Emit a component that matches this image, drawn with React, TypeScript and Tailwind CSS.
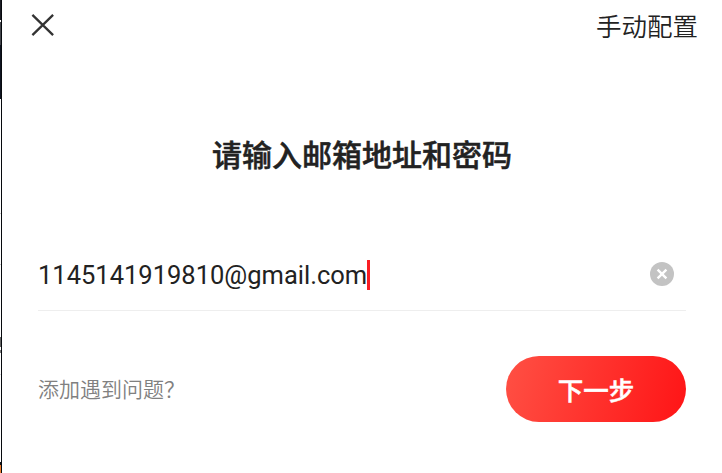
export default function App() {
  return (
    <div className="flex h-[473px] w-[722px] overflow-hidden bg-white font-['Roboto','Noto_Sans_CJK_SC',sans-serif] text-[#222222]">
      {/* sliver of the window behind the sheet */}
      <div className="flex w-px shrink-0 flex-col bg-white">
        <div className="h-5 bg-[#1b1d24]" />
        <div className="h-0.5 bg-white" />
        <div className="h-[23px] bg-[#42444a]" />
        <div className="h-[54px] bg-[#0f1420]" />
        <div className="mt-[114px] h-px bg-[#cccccc]" />
        <div className="mt-[50px] h-px bg-[#cccccc]" />
        <div className="mt-[72px] h-[10px] bg-[#666666]" />
        <div className="mt-[3px] h-[3px] bg-[#777777]" />
        <div className="mt-[21px] h-px bg-[#dddddd]" />
        <div className="mt-[87px] h-[3px] bg-[#10141c]" />
        <div className="flex-1 bg-[#ef7d2c]" />
      </div>
      <div className="w-px shrink-0 bg-[#06090d]" />

      <main className="flex flex-1 flex-col">
        <header className="flex h-[54px] items-center justify-between pr-6 pl-[29px]">
          <button aria-label="关闭" className="mb-[5px]">
            <svg width="24" height="24" viewBox="0 0 24 24" fill="none" stroke="#333333" strokeWidth="2.3">
              <path d="M1.4 1.9 22.1 22.1M22.1 1.9 1.4 22.1" />
            </svg>
          </button>
          <button className="text-[25.5px] leading-[54px] font-[350] whitespace-nowrap">手动配置</button>
        </header>

        <h1 className="mt-[79px] text-center text-[30px] leading-[45px] font-medium [-webkit-text-stroke:0.5px_#222222]">
          请输入邮箱地址和密码
        </h1>

        <div className="mt-[60px] mr-9 ml-9 flex h-[73px] items-center border-b border-[#eeeeee]">
          <span className="mt-0.5 text-[25.5px] leading-[30px] whitespace-nowrap">1145141919810@gmail.com</span>
          <span className="mt-0.5 h-[30px] w-[3px] bg-[#fa1e23]" />
          <button aria-label="清除" className="mr-3 ml-auto">
            <svg width="24" height="24" viewBox="0 0 24 24" fill="none">
              <circle cx="12" cy="12" r="12" fill="#c3c3c3" />
              <path d="m7.6 7.6 8.8 8.8m0-8.8-8.8 8.8" stroke="white" strokeWidth="2.4" />
            </svg>
          </button>
        </div>

        <div className="mt-[45px] mr-9 ml-9 flex items-center justify-between">
          <span className="mt-0.5 text-[21px] leading-[30px] font-[350] text-[#808080]">添加遇到问题？</span>
          <button className="h-[66px] w-[180px] rounded-full bg-linear-[105deg] from-[#ff5044] to-[#ff1416] pt-1 text-[25.5px] leading-[62px] font-medium text-white [-webkit-text-stroke:0.5px_white]">
            下一步
          </button>
        </div>
      </main>
    </div>
  );
}
